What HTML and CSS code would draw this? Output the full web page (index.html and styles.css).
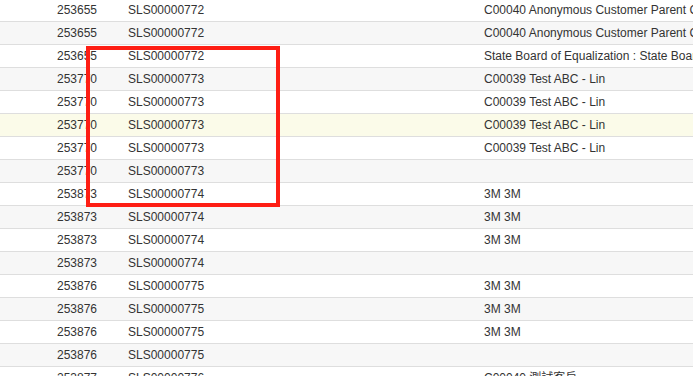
FILE: index.html
```html
<!DOCTYPE html>
<html>
<head>
<meta charset="utf-8">
<link rel="stylesheet" href="styles.css">
</head>
<body>
<div class="grid-wrap">
  <div class="rows">
    <div class="row"><span class="c-id">253655</span><span class="c-so">SLS00000772</span><span class="c-cust">C00040 Anonymous Customer Parent Company</span></div>
    <div class="row alt"><span class="c-id">253655</span><span class="c-so">SLS00000772</span><span class="c-cust">C00040 Anonymous Customer Parent Company</span></div>
    <div class="row"><span class="c-id">253655</span><span class="c-so">SLS00000772</span><span class="c-cust">State Board of Equalization : State Board of Equalization</span></div>
    <div class="row alt"><span class="c-id">253770</span><span class="c-so">SLS00000773</span><span class="c-cust">C00039 Test ABC - Lin</span></div>
    <div class="row"><span class="c-id">253770</span><span class="c-so">SLS00000773</span><span class="c-cust">C00039 Test ABC - Lin</span></div>
    <div class="row hl"><span class="c-id">253770</span><span class="c-so">SLS00000773</span><span class="c-cust">C00039 Test ABC - Lin</span></div>
    <div class="row"><span class="c-id">253770</span><span class="c-so">SLS00000773</span><span class="c-cust">C00039 Test ABC - Lin</span></div>
    <div class="row alt"><span class="c-id">253770</span><span class="c-so">SLS00000773</span><span class="c-cust"></span></div>
    <div class="row"><span class="c-id">253873</span><span class="c-so">SLS00000774</span><span class="c-cust">3M 3M</span></div>
    <div class="row alt"><span class="c-id">253873</span><span class="c-so">SLS00000774</span><span class="c-cust">3M 3M</span></div>
    <div class="row"><span class="c-id">253873</span><span class="c-so">SLS00000774</span><span class="c-cust">3M 3M</span></div>
    <div class="row alt"><span class="c-id">253873</span><span class="c-so">SLS00000774</span><span class="c-cust"></span></div>
    <div class="row"><span class="c-id">253876</span><span class="c-so">SLS00000775</span><span class="c-cust">3M 3M</span></div>
    <div class="row alt"><span class="c-id">253876</span><span class="c-so">SLS00000775</span><span class="c-cust">3M 3M</span></div>
    <div class="row"><span class="c-id">253876</span><span class="c-so">SLS00000775</span><span class="c-cust">3M 3M</span></div>
    <div class="row alt"><span class="c-id">253876</span><span class="c-so">SLS00000775</span><span class="c-cust"></span></div>
    <div class="row"><span class="c-id">253877</span><span class="c-so">SLS00000776</span><span class="c-cust">C00040 測試客戶</span></div>
  </div>
  <div class="mark"></div>
</div>
</body>
</html>
```

FILE: styles.css
```css
html, body {
  margin: 0;
  padding: 0;
  background: #ffffff;
  overflow: hidden;
}

body {
  width: 693px;
  height: 376px;
  font-family: "Liberation Sans", Arial, "Noto Sans CJK SC", sans-serif;
  font-size: 12px;
  color: #333333;
}

.grid-wrap {
  position: relative;
  width: 693px;
  height: 376px;
  overflow: hidden;
}

.rows {
  display: flex;
  flex-direction: column;
  margin-top: -1px;
}

.row {
  display: flex;
  height: 22px;
  line-height: 22px;
  border-bottom: 1px solid #dedede;
  background: #ffffff;
  white-space: nowrap;
}

.row.alt {
  background: #f7f7f7;
}

.row.hl {
  background: #fbfbe9;
}

.c-id {
  flex: 0 0 97px;
  text-align: right;
  box-sizing: border-box;
}

.c-so {
  flex: 0 0 356px;
  padding-left: 31px;
}

.c-cust {
  flex: 0 0 auto;
  padding-left: 0;
}

.mark {
  position: absolute;
  left: 86px;
  top: 46px;
  width: 186px;
  height: 153px;
  border: 4px solid #fe1e14;
}
```
